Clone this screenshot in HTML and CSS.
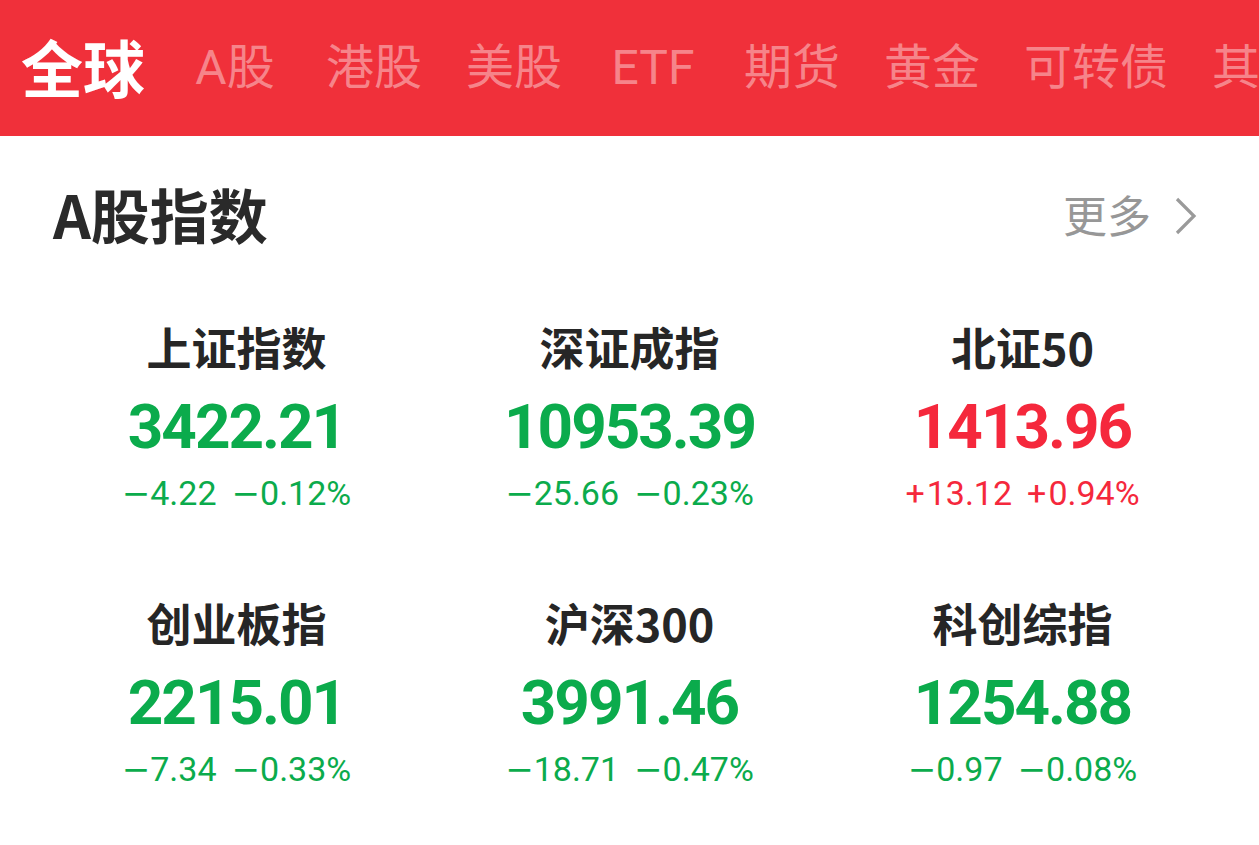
FILE: index.html
```html
<!DOCTYPE html>
<html lang="zh-CN">
<head>
<meta charset="utf-8">
<link rel="stylesheet" href="styles.css">
</head>
<body>
<header class="tabs">
  <span class="tab active">全球</span>
  <span class="tab">A股</span>
  <span class="tab">港股</span>
  <span class="tab">美股</span>
  <span class="tab">ETF</span>
  <span class="tab">期货</span>
  <span class="tab">黄金</span>
  <span class="tab">可转债</span>
  <span class="tab">其他</span>
</header>
<main class="section">
  <div class="section-head">
    <h1 class="title">A股指数</h1>
    <a class="more">更多<svg class="chev" width="26" height="40" viewBox="0 0 26 40"><polyline points="4,3 21,20 4,37" fill="none" stroke="#9a9a9a" stroke-width="3.2"/></svg></a>
  </div>
  <div class="grid">
    <div class="cell"><div class="name">上证指数</div><div class="value down">3422.21</div><div class="chg down"><span><span class="sign">−</span>4.22</span><span><span class="sign">−</span>0.12%</span></div></div>
    <div class="cell"><div class="name">深证成指</div><div class="value down">10953.39</div><div class="chg down"><span><span class="sign">−</span>25.66</span><span><span class="sign">−</span>0.23%</span></div></div>
    <div class="cell"><div class="name">北证50</div><div class="value up">1413.96</div><div class="chg up"><span><span class="plus">+</span>13.12</span><span><span class="plus">+</span>0.94%</span></div></div>
    <div class="cell"><div class="name">创业板指</div><div class="value down">2215.01</div><div class="chg down"><span><span class="sign">−</span>7.34</span><span><span class="sign">−</span>0.33%</span></div></div>
    <div class="cell"><div class="name">沪深300</div><div class="value down">3991.46</div><div class="chg down"><span><span class="sign">−</span>18.71</span><span><span class="sign">−</span>0.47%</span></div></div>
    <div class="cell"><div class="name">科创综指</div><div class="value down">1254.88</div><div class="chg down"><span><span class="sign">−</span>0.97</span><span><span class="sign">−</span>0.08%</span></div></div>
  </div>
</main>
</body>
</html>
```
FILE: styles.css
```css
html, body {
  margin: 0;
  padding: 0;
  background: #ffffff;
  width: 1259px;
  height: 845px;
  overflow: hidden;
  font-family: "Noto Sans CJK SC", "Noto Sans", sans-serif;
}
.tabs {
  height: 136px;
  background: #f0303a;
  display: flex;
  align-items: center;
  padding-left: 21px;
  white-space: nowrap;
  overflow: hidden;
}
.tab {
  font-size: 48px;
  font-weight: 400;
  line-height: 60px;
  color: rgba(255, 255, 255, 0.42);
  margin-right: 44px;
  min-width: 94px;
  text-align: center;
  flex-shrink: 0;
  font-family: Roboto, "Noto Sans CJK SC", sans-serif;
}
.tab.active {
  font-size: 62px;
  font-weight: 700;
  color: #ffffff;
  margin-right: 43px;
  margin-top: -4px;
  font-family: "Noto Sans CJK SC", sans-serif;
}
.section {
  padding: 0 40px;
}
.section-head {
  display: flex;
  justify-content: space-between;
  align-items: center;
  padding-top: 47px;
  height: 62px;
  margin-bottom: 3px;
  padding-left: 13px;
  padding-right: 20px;
}
.title {
  margin: 0;
  font-size: 59px;
  font-weight: 700;
  line-height: 62px;
  color: #2a2a2a;
}
.more {
  display: flex;
  align-items: center;
  font-size: 44px;
  color: #979797;
  line-height: 62px;
}
.chev {
  margin-left: 22px;
  margin-top: 4px;
}
.grid {
  display: grid;
  grid-template-columns: repeat(3, 1fr);
  row-gap: 78px;
  margin-top: 72px;
}
.cell {
  display: flex;
  flex-direction: column;
  align-items: center;
}
.name {
  font-size: 45px;
  font-weight: 700;
  line-height: 60px;
  color: #262626;
}
.value {
  margin-top: 10px;
  font-family: Roboto, "Liberation Sans", sans-serif;
  font-weight: 700;
  font-size: 62px;
  line-height: 80px;
  letter-spacing: -2px;
}
.chg {
  margin-top: 4px;
  display: flex;
  gap: 15px;
  font-family: Roboto, "Liberation Sans", sans-serif;
  font-size: 34px;
  line-height: 44px;
}
.sign {
  font-family: "DejaVu Sans", sans-serif;
}
.plus {
  margin-right: 2px;
}
.down { color: #0bab4c; }
.up { color: #f5283c; }
```
